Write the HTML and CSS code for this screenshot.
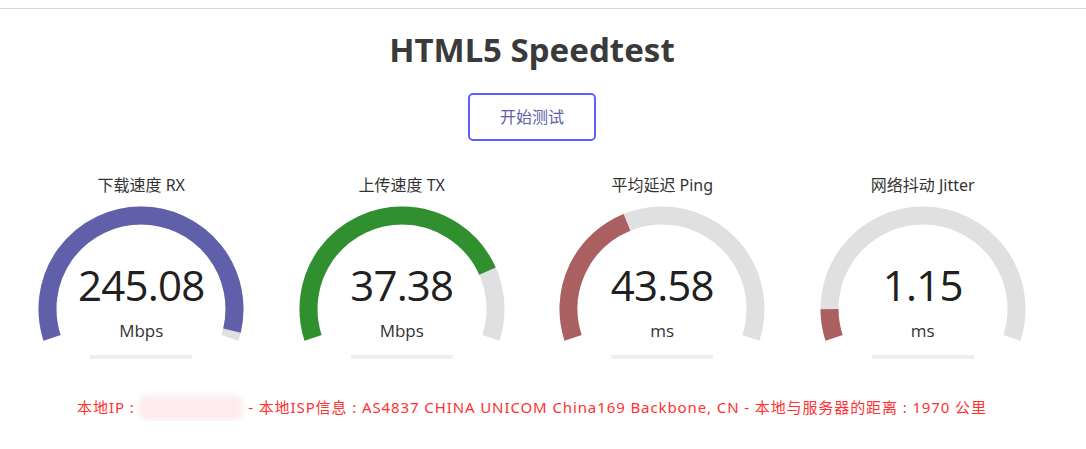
FILE: index.html
```html
<!DOCTYPE html>
<html lang="zh-CN">
<head>
<meta charset="utf-8">
<title>HTML5 Speedtest</title>
<link rel="stylesheet" href="styles.css">
</head>
<body>
<div class="topbar"></div>
<main class="page">
  <h1 class="title">HTML5 Speedtest</h1>
  <button class="start-btn">开始测试</button>
  <section class="gauges">
    <div class="test-area">
      <div class="test-name">下载速度 RX</div>
      <div class="meter">
        <svg class="meter-svg" width="206" height="137" viewBox="0 0 206 137">
          <path class="meter-bk" d="M14.08 131.89 A93.5 93.5 0 1 1 191.92 131.89" />
          <path class="meter-fg dl" pathLength="1" stroke-dasharray="0.978 2" d="M14.08 131.89 A93.5 93.5 0 1 1 191.92 131.89" />
        </svg>
        <span class="meter-value">245.08</span>
        <span class="meter-unit">Mbps</span>
      </div>
      <div class="progress"></div>
    </div>
    <div class="test-area">
      <div class="test-name">上传速度 TX</div>
      <div class="meter">
        <svg class="meter-svg" width="206" height="137" viewBox="0 0 206 137">
          <path class="meter-bk" d="M14.08 131.89 A93.5 93.5 0 1 1 191.92 131.89" />
          <path class="meter-fg ul" pathLength="1" stroke-dasharray="0.806 2" d="M14.08 131.89 A93.5 93.5 0 1 1 191.92 131.89" />
        </svg>
        <span class="meter-value">37.38</span>
        <span class="meter-unit">Mbps</span>
      </div>
      <div class="progress"></div>
    </div>
    <div class="test-area">
      <div class="test-name">平均延迟 Ping</div>
      <div class="meter">
        <svg class="meter-svg" width="206" height="137" viewBox="0 0 206 137">
          <path class="meter-bk" d="M14.08 131.89 A93.5 93.5 0 1 1 191.92 131.89" />
          <path class="meter-fg ping" pathLength="1" stroke-dasharray="0.398 2" d="M14.08 131.89 A93.5 93.5 0 1 1 191.92 131.89" />
        </svg>
        <span class="meter-value">43.58</span>
        <span class="meter-unit">ms</span>
      </div>
      <div class="progress"></div>
    </div>
    <div class="test-area">
      <div class="test-name">网络抖动 Jitter</div>
      <div class="meter">
        <svg class="meter-svg" width="206" height="137" viewBox="0 0 206 137">
          <path class="meter-bk" d="M14.08 131.89 A93.5 93.5 0 1 1 191.92 131.89" />
          <path class="meter-fg ping" pathLength="1" stroke-dasharray="0.083 2" d="M14.08 131.89 A93.5 93.5 0 1 1 191.92 131.89" />
        </svg>
        <span class="meter-value">1.15</span>
        <span class="meter-unit">ms</span>
      </div>
      <div class="progress"></div>
    </div>
  </section>
  <p class="ip-info">本地IP : <span class="masked"></span> - 本地ISP信息 : AS4837 CHINA UNICOM China169 Backbone, CN - 本地与服务器的距离 : 1970 公里</p>
</main>
</body>
</html>
```
FILE: styles.css
```css
html, body {
  margin: 0;
  padding: 0;
  background: #ffffff;
}
body {
  font-family: "Noto Sans", "Open Sans", "Noto Sans CJK SC", sans-serif;
  color: #202020;
}
.topbar {
  height: 8px;
  border-bottom: 1px solid #d8d8d8;
}
.page {
  width: 1064px;
  display: flex;
  flex-direction: column;
  align-items: center;
}
.title {
  margin: 21px 0 0;
  font-size: 33px;
  line-height: 40px;
  font-weight: 700;
  color: #3a3a3a;
  letter-spacing: 0;
}
.start-btn {
  margin-top: 23px;
  width: 128px;
  height: 48px;
  box-sizing: border-box;
  border: 2px solid #6060ff;
  border-radius: 5px;
  background: #fff;
  color: #6060aa;
  font-family: "Noto Sans CJK SC", sans-serif;
  font-size: 16px;
  line-height: 20px;
  padding: 0 0 2px;
}
.gauges {
  margin-top: 34px;
  display: flex;
  gap: 54.5px;
}
.test-area {
  width: 206px;
  display: flex;
  flex-direction: column;
  align-items: center;
}
.test-name {
  font-family: "Noto Sans", "Noto Sans CJK SC", sans-serif;
  font-size: 16px;
  line-height: 20px;
  color: #333;
  height: 20px;
}
.meter {
  position: relative;
  margin-top: 11px;
  width: 206px;
  height: 137px;
}
.meter-svg {
  display: block;
}
.meter-bk {
  fill: none;
  stroke: #e0e0e0;
  stroke-width: 18;
}
.meter-fg {
  fill: none;
  stroke-width: 18;
}
.meter-fg.dl { stroke: #6060aa; }
.meter-fg.ul { stroke: #309030; }
.meter-fg.ping { stroke: #aa6060; }
.meter-value {
  position: absolute;
  left: 0;
  right: 0;
  top: 58px;
  text-align: center;
  font-family: "Open Sans", sans-serif;
  font-size: 42px;
  line-height: 42px;
  letter-spacing: -0.8px;
  color: #202020;
}
.meter-unit {
  position: absolute;
  left: 0;
  right: 0;
  top: 116px;
  text-align: center;
  font-family: "Open Sans", sans-serif;
  font-size: 17px;
  line-height: 17px;
  color: #333;
}
.progress {
  margin-top: 12px;
  width: 102px;
  height: 4px;
  background: #eeeeee;
}
.ip-info {
  margin: 36px 0 0;
  font-family: "Noto Sans", "Noto Sans CJK SC", sans-serif;
  font-size: 15px;
  line-height: 20px;
  letter-spacing: 0.9px;
  color: #ff3131;
  white-space: nowrap;
}
.masked {
  display: inline-block;
  width: 104px;
  height: 26px;
  vertical-align: -8px;
  background: #fdecee;
  border-radius: 8px;
  filter: blur(3px);
}
```
